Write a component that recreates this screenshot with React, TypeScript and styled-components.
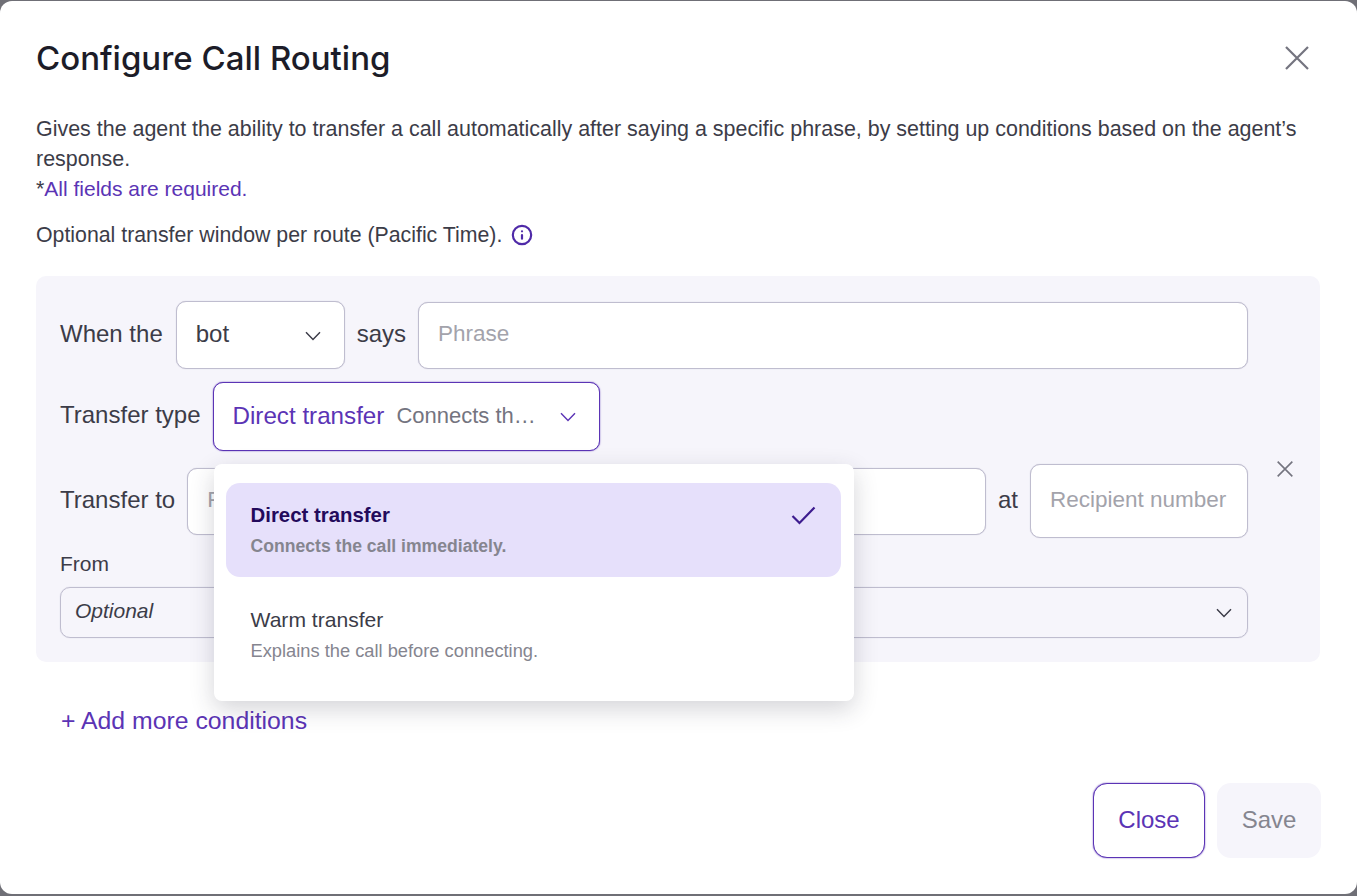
import React from "react";
import styled, { createGlobalStyle } from "styled-components";
import { Info } from "lucide-react";

const GlobalStyle = createGlobalStyle`
  html, body {
    margin: 0;
    padding: 0;
    background: #6f6f76;
  }
  * {
    box-sizing: border-box;
  }
`;

const ChevronIcon = ({ color = "#3a3a46" }: { color?: string }) => (
    <svg width="16" height="10" viewBox="0 0 16 10" fill="none">
        <path d="M1 1.2 8 8.6l7-7.4" stroke={color} strokeWidth="1.4" />
    </svg>
);

const CrossIcon = ({ size, color }: { size: number; color: string }) => (
    <svg width={size} height={size} viewBox="0 0 24 24" fill="none">
        <path d="M1 1l22 22M23 1 1 23" stroke={color} strokeWidth={size > 20 ? 2.2 : 2.4} />
    </svg>
);

const CheckIcon = () => (
    <svg width="25" height="19" viewBox="0 0 25 19" fill="none">
        <path d="M1.5 10 8.5 17 23.5 1.5" stroke="#3d1c8f" strokeWidth="2.2" />
    </svg>
);

export default function App() {
    return (
        <>
            <GlobalStyle />
            <Modal>
                <Header>
                    <Title>Configure Call Routing</Title>
                    <CloseIconButton aria-label="Close">
                        <CrossIcon size={24} color="#74747f" />
                    </CloseIconButton>
                </Header>
                <Description>
                    Gives the agent the ability to transfer a call automatically after saying a specific phrase, by
                    setting up conditions based on the agent’s response.
                    <br />
                    *<Required>All fields are required.</Required>
                </Description>
                <WindowNote>
                    Optional transfer window per route (Pacific Time).
                    <Info size={22} color="#4f2aa8" strokeWidth={2.4} />
                </WindowNote>

                <Panel>
                    <Row>
                        <RowLabel>When the</RowLabel>
                        <BotSelect>
                            bot
                            <ChevronIcon />
                        </BotSelect>
                        <RowLabel>says</RowLabel>
                        <TextInput placeholder="Phrase" />
                    </Row>
                    <Row>
                        <RowLabel>Transfer type</RowLabel>
                        <SelectAnchor>
                            <TypeSelect>
                                <TypeName>Direct transfer</TypeName>
                                <TypeHint>Connects th…</TypeHint>
                                <ChevronIcon color="#5b34b5" />
                            </TypeSelect>
                            <Dropdown>
                                <Option $selected>
                                    <OptionText>
                                        <OptionName $selected>Direct transfer</OptionName>
                                        <OptionHint $selected>Connects the call immediately.</OptionHint>
                                    </OptionText>
                                    <CheckIcon />
                                </Option>
                                <Option>
                                    <OptionText>
                                        <OptionName>Warm transfer</OptionName>
                                        <OptionHint>Explains the call before connecting.</OptionHint>
                                    </OptionText>
                                </Option>
                            </Dropdown>
                        </SelectAnchor>
                    </Row>
                    <Row>
                        <RowLabel>Transfer to</RowLabel>
                        <TextInput placeholder="Person's name" />
                        <RowLabel>at</RowLabel>
                        <RecipientInput placeholder="Recipient number" />
                    </Row>
                    <RemoveButton aria-label="Remove">
                        <CrossIcon size={16} color="#74747f" />
                    </RemoveButton>
                    <FromBlock>
                        <FromLabel>From</FromLabel>
                        <OptionalSelect>
                            <OptionalText>Optional</OptionalText>
                            <ChevronIcon />
                        </OptionalSelect>
                    </FromBlock>
                </Panel>

                <AddLink>+ Add more conditions</AddLink>

                <Footer>
                    <CloseButton>Close</CloseButton>
                    <SaveButton>Save</SaveButton>
                </Footer>
            </Modal>
        </>
    );
}

const Modal = styled.div`
  width: 1357px;
  height: 893px;
  margin-top: 1px;
  padding: 37px 37px 0 36px;
  background-color: #ffffff;
  border-radius: 12px;
  font-family: "Liberation Sans", Arial, sans-serif;
  color: #3c3c48;
  overflow: hidden;
`;
const Header = styled.div`
  display: flex;
  align-items: center;
  justify-content: space-between;
  height: 40px;
  padding-right: 11px;
`;
const Title = styled.h1`
  margin: 0;
  color: #1c1c28;
  font-family: Inter, sans-serif;
  font-size: 33px;
  font-weight: 500;
  line-height: 38px;
`;
const CloseIconButton = styled.button`
  display: flex;
  padding: 0;
  border: 0;
  background: none;
`;
const Description = styled.p`
  margin: 36px 0 0;
  font-size: 21.45px;
  line-height: 30px;
`;
const Required = styled.span`
  color: #5b34b5;
  font-size: 21px;
`;
const WindowNote = styled.div`
  display: flex;
  align-items: center;
  gap: 9px;
  margin-top: 16px;
  font-size: 21.3px;
  line-height: 30px;
`;
const Panel = styled.div`
  display: grid;
  grid-template-columns: 1188px 1fr;
  row-gap: 13px;
  margin-top: 26px;
  padding: 25px 0 24px 24px;
  background-color: #f6f5fb;
  border-radius: 10px;
`;
const Row = styled.div`
  grid-column: 1;
  display: flex;
  align-items: center;
  gap: 12px;
`;
const RowLabel = styled.span`
  padding-bottom: 3px;
  font-size: 24px;
  white-space: nowrap;
`;
const TextInput = styled.input`
  flex: 1;
  min-width: 0;
  height: 67px;
  padding: 0 19px 3px;
  font: inherit;
  font-size: 22.5px;
  color: #3c3c48;
  background-color: #ffffff;
  border: 1px solid #bfbdcf;
  border-radius: 10px;
  box-shadow: 0 0 1px #bfbdcf;
  outline: none;

  &::placeholder {
    color: #a3a3ab;
  }
`;
const RecipientInput = styled(TextInput)`
  flex: 0 0 218px;
  height: 74px;
`;
const SelectBase = styled.button`
  display: flex;
  align-items: center;
  justify-content: space-between;
  font: inherit;
  text-align: left;
  background-color: #ffffff;
  border: 1px solid #bfbdcf;
  border-radius: 10px;
  box-shadow: 0 0 1px #bfbdcf;

  svg {
    margin-top: 3px;
  }
`;
const BotSelect = styled(SelectBase)`
  flex: 0 0 169px;
  height: 68px;
  margin-left: 1px;
  padding: 0 23px 2px 19px;
  font-size: 24px;
  color: #3c3c48;
`;
const SelectAnchor = styled.div`
  position: relative;
`;
const TypeSelect = styled(SelectBase)`
  width: 387px;
  height: 69px;
  padding: 0 23px 2px 19px;
  border-color: #5b34b5;
  box-shadow: 0 0 1.5px #5b34b5;
`;
const TypeName = styled.span`
  color: #5b34b5;
  font-size: 24.2px;
  white-space: nowrap;
`;
const TypeHint = styled.span`
  flex: 1;
  margin-left: 12px;
  color: #74747f;
  font-size: 22px;
  white-space: nowrap;
`;
const Dropdown = styled.div`
  position: absolute;
  top: 82px;
  left: 1px;
  z-index: 2;
  display: flex;
  flex-direction: column;
  gap: 12px;
  width: 640px;
  height: 237px;
  padding: 19px 13px 19px 12px;
  background-color: #ffffff;
  border-radius: 8px;
  box-shadow: 0 8px 24px rgba(40, 40, 60, 0.2);
`;
const Option = styled.div<{ $selected?: boolean }>`
  display: flex;
  align-items: flex-start;
  justify-content: space-between;
  height: 94px;
  padding: ${({ $selected }) => ($selected ? "20px" : "19px")} 25px 0;
  background-color: ${({ $selected }) => ($selected ? "#e6e0fb" : "transparent")};
  border-radius: 14px;

  svg {
    margin-top: 3px;
  }
`;
const OptionText = styled.div`
  display: flex;
  flex-direction: column;
  gap: 8px;
`;
const OptionName = styled.span<{ $selected?: boolean }>`
  color: ${({ $selected }) => ($selected ? "#230a5c" : "#3c3c48")};
  font-size: ${({ $selected }) => ($selected ? "20.4px" : "21.1px")};
  font-weight: ${({ $selected }) => ($selected ? 600 : 400)};
  line-height: 24px;
`;
const OptionHint = styled.span<{ $selected?: boolean }>`
  color: #85858f;
  font-size: ${({ $selected }) => ($selected ? "17.6px" : "18.3px")};
  font-weight: ${({ $selected }) => ($selected ? 600 : 400)};
  line-height: 22px;
`;
const RemoveButton = styled.button`
  grid-column: 2;
  align-self: start;
  justify-self: start;
  display: flex;
  margin: -3px 0 0 29px;
  padding: 0;
  border: 0;
  background: none;
`;
const FromBlock = styled.div`
  grid-column: 1;
  display: flex;
  flex-direction: column;
  gap: 12px;
  margin-top: 2px;
`;
const FromLabel = styled.span`
  font-size: 21px;
  line-height: 22px;
`;
const OptionalSelect = styled(SelectBase)`
  height: 51px;
  padding: 0 15px 3px 14px;
  background-color: transparent;
`;
const OptionalText = styled.span`
  color: #3c3c48;
  font-size: 21px;
  font-style: italic;
`;
const AddLink = styled.div`
  margin: 45px 0 0 25px;
  color: #5b34b5;
  font-size: 24.8px;
  line-height: 28px;
`;
const Footer = styled.div`
  display: flex;
  justify-content: flex-end;
  gap: 12px;
  margin: 48px -1px 0 0;
`;
const CloseButton = styled.button`
  width: 112px;
  height: 75px;
  padding: 0 0 2px;
  font: inherit;
  font-size: 24px;
  color: #5b34b5;
  background-color: #ffffff;
  border: 1.5px solid #5b34b5;
  border-radius: 14px;
  box-shadow: 0 0 1.5px #5b34b5;
`;
const SaveButton = styled.button`
  width: 104px;
  height: 75px;
  padding: 0 0 2px;
  font: inherit;
  font-size: 24px;
  color: #85858f;
  background-color: #f6f5fb;
  border: 0;
  border-radius: 14px;
`;
